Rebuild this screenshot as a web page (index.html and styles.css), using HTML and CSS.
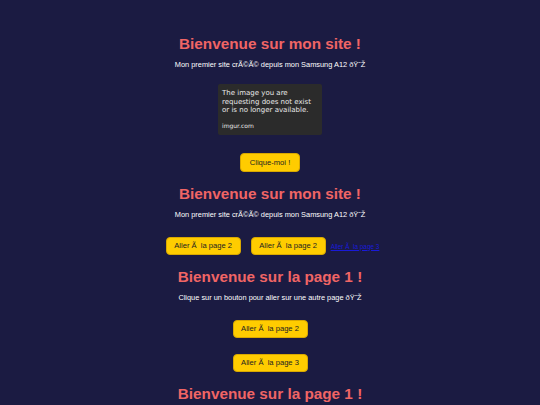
FILE: index.html
```html
<!DOCTYPE html>
<html lang="fr">
<head>
<meta charset="utf-8">
<title>Bienvenue</title>
<link rel="stylesheet" href="styles.css">
</head>
<body>
<main class="page">
  <h1 class="title t1">Bienvenue sur mon site !</h1>
  <p class="text">Mon premier site crÃ©Ã© depuis mon Samsung A12 ðŸ˜Ž</p>
  <div class="missing">
    <div class="missing-msg">The image you are requesting does not exist or is no longer available.</div>
    <div class="missing-src">imgur.com</div>
  </div>
  <button class="btn btn-first">Clique-moi !</button>

  <h1 class="title">Bienvenue sur mon site !</h1>
  <p class="text">Mon premier site crÃ©Ã© depuis mon Samsung A12 ðŸ˜Ž</p>
  <div class="row">
    <button class="btn">Aller Ã&nbsp; la page 2</button>
    <button class="btn">Aller Ã&nbsp; la page 2</button>
    <a class="link" href="#">Aller Ã&nbsp; la page 3</a>
  </div>

  <h1 class="title">Bienvenue sur la page 1 !</h1>
  <p class="text">Clique sur un bouton pour aller sur une autre page ðŸ˜Ž</p>
  <button class="btn btn-stack">Aller Ã&nbsp; la page 2</button>
  <button class="btn btn-stack2">Aller Ã&nbsp; la page 3</button>

  <h1 class="title">Bienvenue sur la page 1 !</h1>
</main>
</body>
</html>
```
FILE: styles.css
```css
html, body {
  margin: 0;
  padding: 0;
  background: #1b1b42;
  height: 100%;
  overflow: hidden;
}
body {
  font-family: "Liberation Sans", Arial, sans-serif;
  color: #ffffff;
}
.page {
  display: flex;
  flex-direction: column;
  align-items: center;
  padding-top: 34px;
}
.title {
  margin: 12px 0 0 0;
  font-size: 15.3px;
  line-height: 20px;
  font-weight: bold;
  color: #f06565;
}
.t1 {
  margin-top: 0;
}
.text {
  margin: 6px 0 0 0;
  font-size: 7.4px;
  line-height: 10px;
  color: #ffffff;
}
.missing {
  margin-top: 14px;
  width: 104px;
  height: 51px;
  box-sizing: border-box;
  background: #2b2b2b;
  border-radius: 2px;
  padding: 5px 4px 5px 4px;
  color: #e8e8e8;
  font-family: "DejaVu Sans", sans-serif;
  font-size: 7px;
  line-height: 8.5px;
  display: flex;
  flex-direction: column;
  justify-content: space-between;
}
.missing-src {
  font-size: 6px;
}
.btn {
  font-family: "Liberation Sans", Arial, sans-serif;
  font-size: 7.6px;
  line-height: 10px;
  color: #222222;
  background: #ffcc00;
  border: 1px solid #d9a800;
  border-radius: 4px;
  padding: 0;
  white-space: nowrap;
  text-align: center;
  height: 19px;
  box-sizing: border-box;
}
.btn-first {
  margin-top: 18px;
  width: 60px;
}
.row {
  margin-top: 17px;
  display: flex;
  align-items: center;
  padding-left: 5px;
}
.row .btn {
  width: 75px;
  height: 18px;
  margin-right: 10px;
}
.row .btn + .btn {
  margin-right: 5px;
}
.link {
  font-size: 6.4px;
  color: #1a1ad8;
  text-decoration: underline;
  white-space: nowrap;
}
.btn-stack {
  margin-top: 17px;
  width: 75px;
  height: 18px;
}
.btn-stack2 {
  margin-top: 16px;
  width: 75px;
  height: 18px;
}
```
